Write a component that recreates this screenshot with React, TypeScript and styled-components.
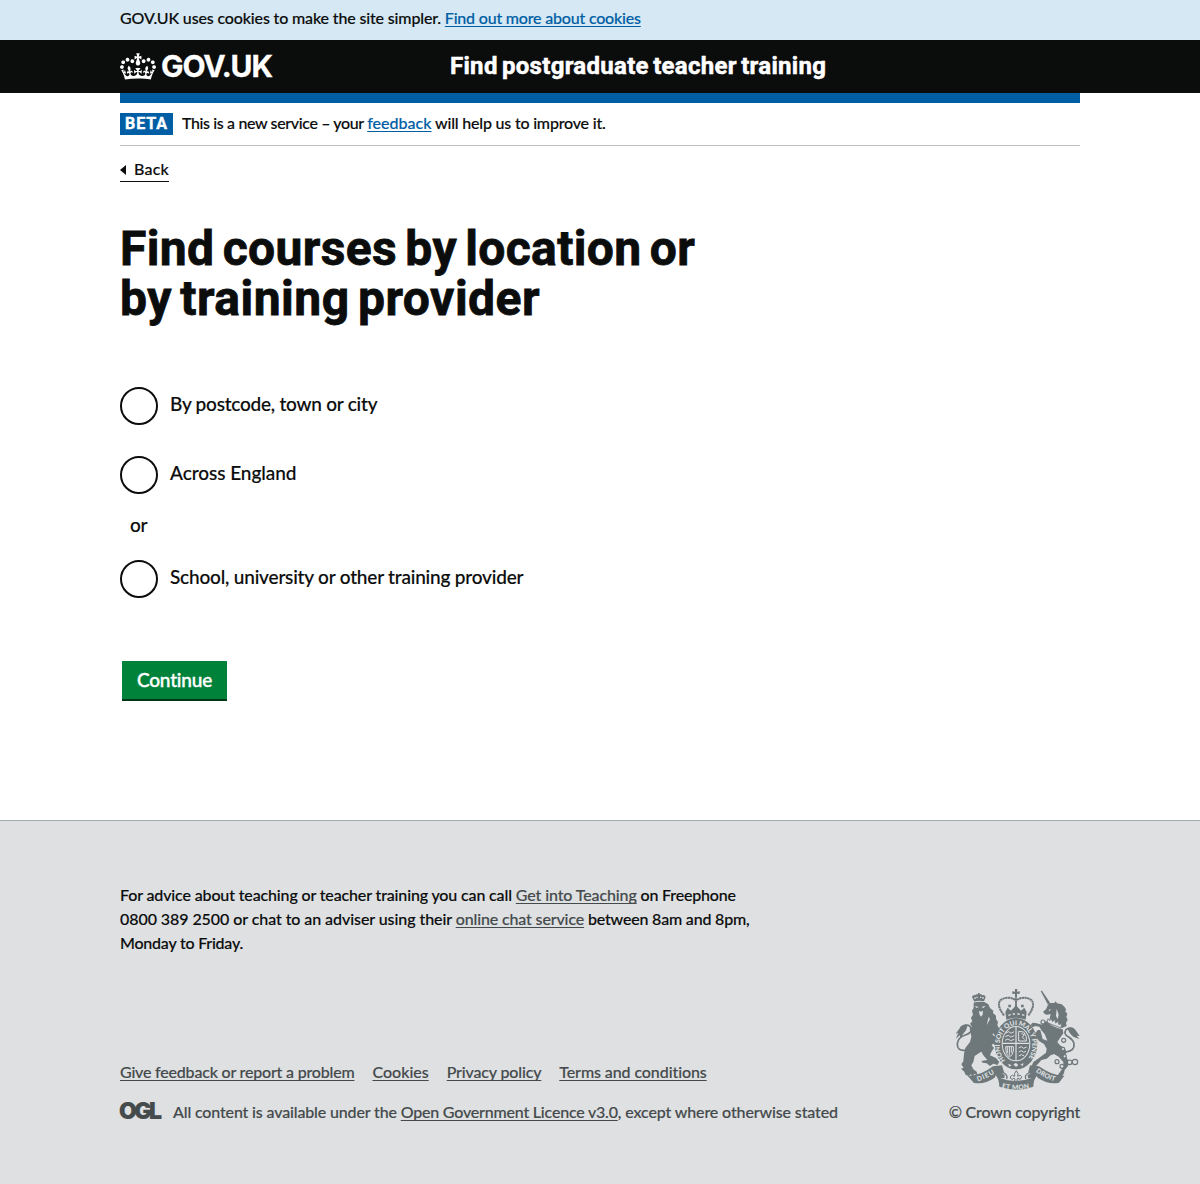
import React from "react";
import styled, { createGlobalStyle } from "styled-components";

const TEXT = `Lato, "Liberation Sans", sans-serif`;
const BOLD = `Roboto, "Liberation Sans", sans-serif`;
const INK = "#0b0c0c";
const BLUE = "#005ea5";

const GlobalStyle = createGlobalStyle`
  *, *::before, *::after { box-sizing: border-box; }
  body {
    margin: 0;
    background: #dee0e2;
    color: ${INK};
    font: 500 16px/24px ${TEXT};
    -webkit-text-stroke: 0.15px;
  }
  h1, p, ul { margin: 0; padding: 0; }
`;

const Container = styled.div`
  width: 960px;
  margin: 0 auto;
`;

const Run = styled.span<{ $track: number }>`
  letter-spacing: ${(p) => p.$track}px;
  white-space: pre;
`;

const Link = styled.a<{ $track: number; $tone?: string }>`
  color: ${(p) => p.$tone ?? BLUE};
  letter-spacing: ${(p) => p.$track}px;
  text-decoration: underline;
  text-decoration-thickness: 1px;
  text-underline-offset: 2px;
  text-decoration-skip-ink: none;
  white-space: pre;
`;

const CookieBar = styled.div`
  height: 40px;
  padding-top: 6px;
  background: #d5e8f3;
`;

const Header = styled.header`
  height: 53px;
  background: ${INK};
  color: #fff;
`;

const HeaderRow = styled(Container)`
  display: flex;
  align-items: center;
  height: 52px;
`;

const Brand = styled.a`
  display: flex;
  align-items: center;
  width: 330px;
  color: #fff;
  font: 700 30px/52px Inter, "Liberation Sans", sans-serif;
  letter-spacing: -1.1px;
  -webkit-text-stroke: 0.3px;
`;

const Crown = styled.svg`
  width: 36px;
  height: 27px;
  margin-right: 5px;
`;

const ServiceName = styled.a`
  color: #fff;
  font: 700 24px/50px ${BOLD};
  letter-spacing: 0.3px;
  word-spacing: -2px;
  -webkit-text-stroke: 0.5px;
`;

const Main = styled.main`
  height: 727px;
  background: #fff;
`;

const BlueBar = styled.div`
  height: 10px;
  background: ${BLUE};
`;

const Phase = styled.div`
  display: flex;
  align-items: center;
  height: 43px;
  border-bottom: 1px solid #bfc1c3;
`;

const PhaseText = styled.p`
  padding-bottom: 2px;
`;

const Tag = styled.strong`
  width: 53px;
  height: 22px;
  margin-right: 9px;
  padding-left: 5px;
  background: ${BLUE};
  color: #fff;
  font: 700 16px/22px ${BOLD};
  letter-spacing: 0.95px;
  -webkit-text-stroke: 0.4px;
`;

const Back = styled.a`
  display: flex;
  align-items: center;
  width: 49px;
  height: 24px;
  margin-top: 12px;
  border-bottom: 1px solid ${INK};
  gap: 8px;
`;

const BackText = styled(Run)`
  padding-bottom: 2px;
`;

const Arrow = styled.span`
  border: 5px solid transparent;
  border-left: 0;
  border-right: 6px solid ${INK};
`;

const Title = styled.h1`
  display: flex;
  flex-direction: column;
  margin-top: 42px;
  font: 700 48px/50px ${BOLD};
  word-spacing: -4px;
  -webkit-text-stroke: 0.8px;
`;

const Choices = styled.div`
  display: flex;
  flex-direction: column;
  margin-top: 63px;
  font-size: 19px;
`;

const Choice = styled.label<{ $gap?: number }>`
  display: flex;
  align-items: center;
  height: 38px;
  margin-top: ${(p) => p.$gap ?? 0}px;
  gap: 12px;
`;

const Circle = styled.input`
  appearance: none;
  width: 38px;
  height: 38px;
  margin: 0;
  border: 2px solid ${INK};
  border-radius: 50%;
`;

const ChoiceText = styled(Run)`
  padding-bottom: 4px;
`;

const Or = styled.p`
  height: 24px;
  margin-top: 19px;
  padding-left: 10px;
`;

const Continue = styled.button`
  display: block;
  width: 105px;
  height: 38px;
  margin: 63px 0 0 2px;
  padding: 0;
  border: 0;
  background: #00823b;
  box-shadow: 0 2px 0 #003618;
  color: #fff;
  font: 500 19px/38px ${TEXT};
  letter-spacing: -0.18px;
  -webkit-text-stroke: 0.4px;
`;

const Footer = styled.footer`
  height: 364px;
  padding-top: 62px;
  border-top: 1px solid #a1acb2;
`;

const FooterBottom = styled.div`
  display: flex;
  justify-content: space-between;
  margin-top: 34px;
  color: #454a4c;
`;

const FooterLeft = styled.div`
  display: flex;
  flex-direction: column;
  justify-content: flex-end;
  gap: 16px;
`;

const Links = styled.div`
  display: flex;
  gap: 18px;
`;

const Licence = styled.div`
  display: flex;
`;

const Ogl = styled.span`
  width: 54px;
  margin-left: -1px;
  font: 900 23px/22px Inter, sans-serif;
  letter-spacing: -2.6px;
`;

const CrownCopyright = styled.a`
  display: flex;
  flex-direction: column;
  align-items: flex-end;
  gap: 8px;
`;

const Arms = styled.svg`
  width: 125px;
  height: 103px;
`;

const grey = "#6e777a";
const paper = "#dee0e2";

function CrownMark() {
  return (
    <Crown viewBox="0 0 132 97" fill="#fff" aria-hidden="true">
      <path d="M25 30.2c3.5 1.5 7.7-.2 9.1-3.7 1.5-3.6-.2-7.8-3.9-9.2-3.6-1.4-7.6.3-9.1 3.9-1.4 3.5.3 7.5 3.9 9zM9 39.5c3.6 1.5 7.8-.2 9.2-3.7 1.5-3.6-.2-7.8-3.9-9.1-3.6-1.5-7.6.2-9.1 3.8-1.4 3.5.3 7.5 3.8 9zM4.4 57.2c3.5 1.5 7.7-.2 9.1-3.8 1.5-3.6-.2-7.7-3.9-9.1-3.5-1.5-7.6.3-9.1 3.8-1.4 3.5.3 7.6 3.9 9.1zm38.3-21.4c3.5 1.5 7.7-.2 9.1-3.8 1.5-3.6-.2-7.7-3.9-9.1-3.6-1.5-7.6.3-9.1 3.8-1.3 3.6.4 7.7 3.9 9.1zm64.4-5.6c-3.6 1.5-7.8-.2-9.1-3.7-1.5-3.6.2-7.8 3.8-9.2 3.6-1.4 7.7.3 9.2 3.9 1.3 3.5-.4 7.5-3.9 9zm15.9 9.3c-3.6 1.5-7.7-.2-9.1-3.7-1.5-3.6.2-7.8 3.7-9.1 3.6-1.5 7.7.2 9.2 3.8 1.5 3.5-.3 7.5-3.8 9zm4.7 17.7c-3.6 1.5-7.8-.2-9.2-3.8-1.5-3.6.2-7.7 3.9-9.1 3.6-1.5 7.7.3 9.2 3.8 1.3 3.5-.4 7.6-3.9 9.1zM89.3 35.8c-3.6 1.5-7.8-.2-9.2-3.8-1.4-3.6.2-7.7 3.9-9.1 3.6-1.5 7.7.3 9.2 3.8 1.4 3.6-.3 7.7-3.9 9.1zM69.7 17.7l8.9 4.7V9.3l-8.9 2.8c-.2-.3-.5-.6-.9-.9L72.4 0H59.6l3.5 11.2c-.3.3-.6.5-.9.9l-8.8-2.8v13.1l8.8-4.7c.3.3.6.7.9.9l-5 15.4v.1c-.2.8-.4 1.6-.4 2.4 0 4.1 3.1 7.5 7 8.1h.2c.3 0 .7.1 1 .1.4 0 .7 0 1-.1h.2c4-.6 7.1-4.1 7.1-8.1 0-.8-.1-1.7-.4-2.4V34l-5.1-15.4c.4-.2.7-.6 1-.9zM66 92.8c16.9 0 32.8 1.1 47.1 3.2 4-16.9 8.9-26.7 14-33.5l-9.6-3.4c1 4.9 1.1 7.2 0 10.2-1.5-1.4-3-4.3-4.2-8.7L108.6 76c2.8-2 5-3.2 7.5-3.3-4.4 9.4-10 11.9-13.6 11.2-4.3-.8-6.3-4.6-5.6-7.9 1-4.7 5.7-5.9 8-.5 4.3-8.7-3-11.4-7.6-8.8 7.1-7.2 7.9-13.5 2.1-21.1-8 6.1-8.1 12.3-4.5 20.8-4.7-5.4-12.1-2.5-9.5 6.2 3.4-5.2 7.9-2 7.2 3.1-.6 4.3-6.4 7.8-13.5 7.2-10.3-.9-10.9-8-11.2-13.8 2.5-.5 7.1 1.8 11 7.3L80.2 60c-4.1 4.4-8 5.3-12.3 5.4 1.4-4.4 8-11.6 8-11.6H55.5s6.4 7.2 7.9 11.6c-4.2-.1-8-1-12.3-5.4l1.4 16.4c3.9-5.5 8.5-7.7 10.9-7.3-.3 5.8-.9 12.8-11.1 13.8-7.2.6-12.9-2.9-13.5-7.2-.7-5 3.8-8.3 7.1-3.1 2.7-8.7-4.6-11.6-9.4-6.2 3.7-8.5 3.6-14.7-4.6-20.8-5.8 7.6-5 13.9 2.2 21.1-4.7-2.6-11.9.1-7.7 8.8 2.3-5.5 7.1-4.2 8.1.5.7 3.3-1.3 7.1-5.7 7.9-3.5.7-9-1.8-13.5-11.2 2.5.1 4.7 1.3 7.5 3.3l-4.7-15.4c-1.2 4.4-2.7 7.2-4.3 8.7-1.1-3-.9-5.3 0-10.2l-9.5 3.4c5 6.9 9.9 16.7 14 33.5 14.8-2.1 30.8-3.2 47.7-3.2z" />
    </Crown>
  );
}

function RoyalArms() {
  return (
    <Arms viewBox="45 27 375 309" fill={grey} aria-hidden="true">
      {/* lion: crown, mane and body, hind legs, forelegs, tail */}
      <path d="M103 65L96 51q3-8 10-5 1-5 8-3v-4h5v4q7-2 8 3 7-3 10 5l-5 13q-15-4-29 1z" />
      <path d="M103 52h4v5h-4zM109 50h4v4h-4zM120 50h4v4h-4zM127 51h4v5h-4z" fill={paper} />
      <path d="M101 68Q116 63 133 66L145 73 150 84 160 92 159 99 168 107 168 117 174 126 172 136 178 146 174 156 176 172 166 186 154 196 134 204 122 216 104 228 100 246 94 256 100 268 110 275 113 285 103 282 98 288 92 283 86 288 77 285 73 275 63 266 71 263 64 253 70 244 72 222 76 204 90 186 94 170 92 158 89 146 96 140 90 131 97 124 93 113 99 104 96 92 101 84z" />
      <path d="M118 205L150 190 162 204 154 216 150 226 168 234 178 246 172 255 160 251 150 258 140 250 128 248 124 243 142 240 130 226z" />
      <path d="M160 168L178 180 186 190 184 200 176 202 166 196 150 184z" />
      <path d="M104 77l12 4-6 3zM124 81l12-4-5 7zM117 92l5 3 7-3-1 12-5 6-5-7zM146 110l-6 26 10-18zM160 160l7 10-10-6z" fill={paper} />
      <path d="M76 211Q51 214 52 191Q54 172 76 165Q97 158 94 146Q90 133 74 136" fill="none" stroke={grey} strokeWidth="5" />
      <path d="M82 134Q64 132 59 145L47 161 55 159 47 177 59 166 61 174 72 158Q82 148 82 134z" />
      {/* unicorn: horn, head, collar, body, legs, tail */}
      <path d="M302 33l4-1 25 38-7 4z" />
      <path d="M324 74L332 69 343 69 347 64 351 70 365 73 373 80 378 88 376 94 382 102 379 110 383 120 378 128 380 138 366 144 344 134 328 120 332 102 322 104 315 103 309 95 318 88z" />
      <path d="M325 90l8-3-4 6zM350 86l-2 22 5 10 3-14z" fill={paper} />
      <path d="M324 116l5 6 4-7 5 10 6-7 3 11 7-5 3 10 8-4-2 14-42-16z" fill={paper} stroke={grey} strokeWidth="2.5" />
      <path d="M320 124L334 136 352 144 368 148 370 160 360 174 352 186 360 196 374 204 380 216 376 226 384 240 384 258 374 270 372 280 366 289 352 287 360 276 370 262 370 246 356 230 342 222 332 226 320 236 304 240 296 250 286 260 275 258 280 246 292 238 302 230 318 218 320 206 312 192 298 184 288 172 286 158 294 150 304 150 298 140 286 138 278 142 272 134 278 128 290 130 306 134 310 126z" />
      <path d="M300 146l14 16 8 20-14-5z" fill={paper} />
      <path d="M378 216Q405 212 402 191Q399 179 386 171Q369 162 378 149Q386 142 397 147" fill="none" stroke={grey} strokeWidth="5" />
      <path d="M382 144Q398 137 408 152L419 168 410 167 418 177 401 171Q388 162 382 144z" />
      <g fill={paper} stroke={grey} strokeWidth="3.5">
        <circle cx="371" cy="181" r="6" /><circle cx="369" cy="207" r="5" />
        <circle cx="374" cy="229" r="5" /><circle cx="351" cy="245" r="6" />
        <circle cx="366" cy="259" r="6" /><circle cx="389" cy="247" r="7" />
        <circle cx="405" cy="246" r="8" /><circle cx="309" cy="126" r="6" />
      </g>
      {/* imperial crown */}
      <path d="M225 27h7l-1 8 8-1v8l-8-1v12h-6V41l-8 1v-8l8 1z" />
      <g fill="none" stroke={grey} strokeWidth="6" strokeDasharray="7 1.2">
        <path d="M192 106Q168 75 182 60Q205 46 226 60" />
        <path d="M265 106Q288 75 274 60Q252 46 231 60" />
        <path d="M228 55v40" />
      </g>
      <path d="M196 96L203 83 213 92 228 76 243 92 253 83 260 96 257 119Q228 107 199 119z" />
      <path d="M205 106l7-2M218 102h7M232 102h7M246 104l7 2" stroke={paper} strokeWidth="4" />
      <path d="M205 74h8v8h-8zM243 74h8v8h-8z" />
      {/* garter and quartered shield */}
      <ellipse cx="228" cy="191" rx="64" ry="77" />
      <ellipse cx="228" cy="191" rx="43" ry="53" fill={paper} />
      <ellipse cx="228" cy="191" rx="40" ry="50" />
      <path d="M228 140v102M188 190h80" stroke={paper} strokeWidth="3.5" />
      <g fill="none" stroke={paper} strokeWidth="3">
        <path d="M198 159l8-4 7 5 9-5M196 170l9-4 7 5 11-4M195 181l9-4 8 5 11-4" />
        <path d="M236 204l8-4 7 5 9-4M236 216l8-4 7 5 7-3M236 228l8-4 8 3" />
        <path d="M236 154l15 2 8 14v13h-23zM244 161l9 3-6 8 7 6" />
        <path d="M197 200h23v13q-3 15-12 18-11-7-11-31zM202 201v18M208 201v26M214 201v17" />
      </g>
      <path id="garter" d="M196 241A49 60 0 1 1 260 241" fill="none" />
      <text fontFamily="Lato, sans-serif" fontWeight="900" fontSize="20" fill={paper}>
        <textPath href="#garter" textLength="262">HONI SOIT QUI MAL Y PENSE</textPath>
      </text>
      <path d="M205 251l10 5-8 4zM220 253l8-4 7 6-7 6zM241 254l9-5-1 9z" fill={paper} />
      {/* motto ribbon */}
      <path d="M83 287Q120 289 159 259L186 256 193 280 168 284 164 293Q130 316 101 308z" />
      <path d="M373 287Q336 288 297 259L270 256 264 280 288 284 293 293Q326 315 357 308z" />
      <path d="M166 285q17-10 28 0l-1 10-13 0q48 16 96-1l-12 1-1-10q17-9 29 1-12 12-12 34-50 18-102 0-1-25-12-35z" />
      <path d="M192 279Q204 286 200 297M266 279Q252 286 258 297" fill="none" stroke={grey} strokeWidth="4" />
      <path d="M229 272q8 9 4 17 8-8 12 1 0 8-8 8l-2-4-4 3 1 7h-8l1-7-4-3-3 4q-8 0-7-8 5-8 13-1-3-8 5-17z" stroke={grey} strokeWidth="3" fill={paper} />
      <path id="dieu" d="M113 304q27-8 57-27" fill="none" />
      <path id="mon" d="M185 324q43 10 91-1" fill="none" />
      <path id="droit" d="M287 275q25 20 60 29" fill="none" />
      <g fontFamily="Lato, sans-serif" fontWeight="900" fontSize="20" fill={paper}>
        <text><textPath href="#dieu" textLength="56">DIEU</textPath></text>
        <text><textPath href="#mon" textLength="84">ET MON</textPath></text>
        <text><textPath href="#droit" textLength="64">DROIT</textPath></text>
      </g>
    </Arms>
  );
}

export default function App() {
  return (
    <>
      <GlobalStyle />
      <CookieBar>
        <Container>
          <Run $track={-0.15}>GOV.UK uses cookies to make the site simpler. </Run>
          <Link href="#" $track={-0.2}>Find out more about cookies</Link>
        </Container>
      </CookieBar>
      <Header>
        <HeaderRow>
          <Brand><CrownMark />GOV.UK</Brand>
          <ServiceName>Find postgraduate teacher training</ServiceName>
        </HeaderRow>
      </Header>
      <Main>
        <Container>
          <BlueBar />
          <Phase>
            <Tag>BETA</Tag>
            <PhaseText>
              <Run $track={-0.37}>This is a new service – your </Run>
              <Link href="#" $track={0.02}>feedback</Link>
              <Run $track={-0.2}> will help us to improve it.</Run>
            </PhaseText>
          </Phase>
          <Back><Arrow /><BackText $track={0.2}>Back</BackText></Back>
          <Title>
            <Run $track={0.36}>Find courses by location or</Run>
            <Run $track={0.49}>by training provider</Run>
          </Title>
          <Choices>
            <Choice>
              <Circle type="radio" name="by" />
              <ChoiceText $track={-0.23}>By postcode, town or city</ChoiceText>
            </Choice>
            <Choice $gap={31}>
              <Circle type="radio" name="by" />
              <ChoiceText $track={-0.05}>Across England</ChoiceText>
            </Choice>
            <Or><Run $track={-0.4}>or</Run></Or>
            <Choice $gap={23}>
              <Circle type="radio" name="by" />
              <ChoiceText $track={-0.19}>School, university or other training provider</ChoiceText>
            </Choice>
          </Choices>
          <Continue>Continue</Continue>
        </Container>
      </Main>
      <Footer>
        <Container>
          <p>
            <Run $track={-0.14}>For advice about teaching or teacher training you can call </Run>
            <Link href="#" $track={-0.11} $tone="#454a4c">Get into Teaching</Link>
            <Run $track={-0.18}> on Freephone</Run>
            <br />
            <Run $track={-0.07}>0800 389 2500 or chat to an adviser using their </Run>
            <Link href="#" $track={-0.14} $tone="#454a4c">online chat service</Link>
            <Run $track={-0.19}> between 8am and 8pm,</Run>
            <br />
            <Run $track={-0.22}>Monday to Friday.</Run>
          </p>
          <FooterBottom>
            <FooterLeft>
              <Links>
                <Link href="#" $track={-0.2} $tone="#454a4c">Give feedback or report a problem</Link>
                <Link href="#" $track={0} $tone="#454a4c">Cookies</Link>
                <Link href="#" $track={-0.16} $tone="#454a4c">Privacy policy</Link>
                <Link href="#" $track={-0.09} $tone="#454a4c">Terms and conditions</Link>
              </Links>
              <Licence>
                <Ogl>OGL</Ogl>
                <Run $track={-0.15}>All content is available under the </Run>
                <Link href="#" $track={-0.2} $tone="#454a4c">Open Government Licence v3.0</Link>
                <Run $track={-0.13}>, except where otherwise stated</Run>
              </Licence>
            </FooterLeft>
            <CrownCopyright>
              <RoyalArms />
              <Run $track={-0.19}>© Crown copyright</Run>
            </CrownCopyright>
          </FooterBottom>
        </Container>
      </Footer>
    </>
  );
}
